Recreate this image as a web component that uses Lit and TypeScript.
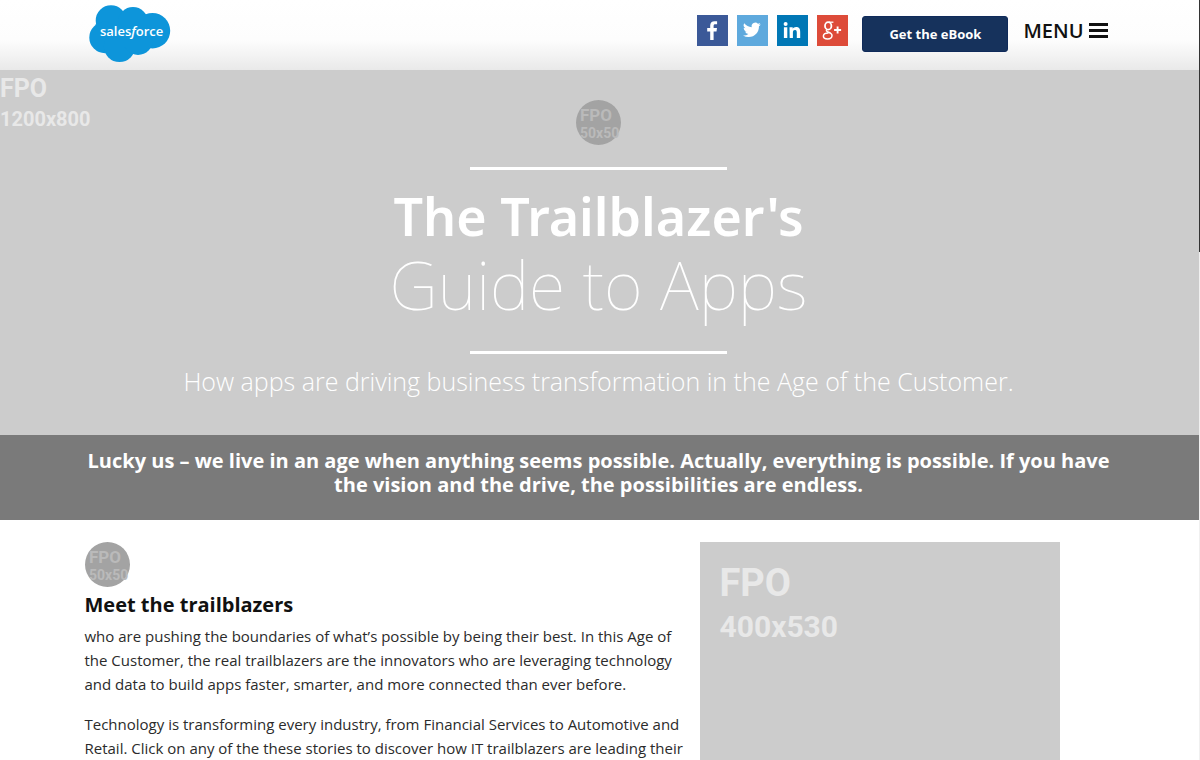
import { LitElement, html, css, svg } from "lit";
import { customElement, property } from "lit/decorators.js";

const cloud = svg`
  <g fill="#0d95da">
    <circle cx="22" cy="15.500" r="15.300"></circle>
    <circle cx="44" cy="17" r="15"></circle>
    <circle cx="63.500" cy="25.700" r="17.700"></circle>
    <circle cx="16" cy="32.500" r="15.700"></circle>
    <circle cx="30.500" cy="41.300" r="15.700"></circle>
    <circle cx="49" cy="35" r="15"></circle>
    <rect x="20" y="14" width="40" height="28"></rect>
  </g>`;

const socials = [
  {
    name: "Facebook",
    tone: "facebook",
    art: svg`<path fill="#fff" d="M17.1 25v-8.600h2.900l.5-3.400h-3.400v-2.100c0-1 .4-1.600 1.700-1.600h1.800V6.300c-.4 0-1.400-.1-2.500-.1-2.700 0-4.400 1.500-4.400 4.300V13h-3v3.400h3V25z" transform="translate(-.5 0)"></path>`,
  },
  {
    name: "Twitter",
    tone: "twitter",
    art: svg`<path transform="translate(6 6) scale(.74)" fill="#fff" d="M23.95 4.57a10 10 0 0 1-2.82.77 4.96 4.96 0 0 0 2.16-2.72c-.95.55-2 .95-3.13 1.18a4.92 4.92 0 0 0-8.38 4.48C7.69 8.09 4.07 6.13 1.64 3.16a4.92 4.92 0 0 0 1.52 6.57 4.9 4.9 0 0 1-2.23-.61v.06a4.92 4.92 0 0 0 3.95 4.83 5 5 0 0 1-2.21.08 4.94 4.94 0 0 0 4.6 3.42A9.87 9.87 0 0 1 0 19.54a14 14 0 0 0 7.55 2.21c9.05 0 14-7.5 14-13.98 0-.21 0-.42-.02-.63a9.9 9.9 0 0 0 2.46-2.55z"></path>`,
  },
  {
    name: "LinkedIn",
    tone: "linkedin",
    art: svg`<g fill="#fff"><circle cx="8.6" cy="9.1" r="2"></circle><path d="M6.9 12.3h3.400V23H6.900zM12.500 12.300h3.200v1.500c.6-1 1.800-1.800 3.400-1.800 3.400 0 4.100 2.200 4.100 5.100V23h-3.400v-5.200c0-1.300 0-2.900-1.800-2.900s-2.100 1.400-2.100 2.800V23h-3.200z"></path></g>`,
  },
  {
    name: "Google Plus",
    tone: "google",
    art: svg`<g fill="none" stroke="#fff"><ellipse cx="11.2" cy="10.900" rx="3.200" ry="3.700" stroke-width="1.800"></ellipse><path stroke-width="1.300" d="M12 7.200h4.400"></path><path stroke-width="1.500" d="M10.200 14.300c-1.400 1.200-.9 2 .6 2.600 2 .7 4.200 1.400 4.200 3.700 0 2.100-2 3.400-4.400 3.400-2.500 0-4.200-1.200-4.200-3 0-2 2-3.100 5-3.100"></path><path stroke-width="1.900" d="M20.600 11.500v7M17.100 15h7"></path></g>`,
  },
];

@customElement("fpo-badge")
export class FpoBadge extends LitElement {
  static styles = css`
    :host {
      display: block;
      width: 45px;
    }
    .disc {
      display: block;
      width: 45px;
      height: 45px;
    }
    .disc text {
      font-family: Roboto, sans-serif;
      font-weight: 700;
      fill: #bababa;
    }
  `;
  render() {
    return html`<svg class="disc" viewBox="0 0 45 45" role="img" aria-label="FPO 50x50">
      <circle cx="22.5" cy="22.5" r="22.5" fill="#a3a3a3"></circle>
      <text x="4" y="21" font-size="17">FPO</text>
      <text x="4" y="38" font-size="14">50x50</text>
    </svg>`;
  }
}

@customElement("fpo-label")
export class FpoLabel extends LitElement {
  @property() size = "";
  static styles = css`
    :host {
      display: block;
      font-family: Roboto, sans-serif;
      font-weight: 700;
      color: #e8e8e8;
    }
    .word,
    .size {
      display: block;
    }
    .word {
      font-size: var(--word-size, 25px);
      line-height: var(--word-line, 30px);
    }
    .size {
      font-size: var(--size-size, 20px);
      line-height: var(--size-line, 30px);
    }
  `;
  render() {
    return html`<span class="word">FPO</span><span class="size">${this.size}</span>`;
  }
}

@customElement("app-root")
export class AppRoot extends LitElement {
  static styles = css`
    :host {
      display: block;
      position: relative;
      height: 100vh;
      overflow: hidden;
      background: #fff;
      color: #2b2b2b;
      font: 15px/24px "Open Sans", "Noto Sans", sans-serif;
    }
    * {
      box-sizing: border-box;
    }
    h1, h2, p {
      margin: 0;
    }
    .header,
    .hero,
    .band,
    .body {
      padding-right: 3px;
    }
    .container {
      max-width: 1030px;
      margin: 0 auto;
    }
    .header {
      background: linear-gradient(#fff 0, #fdfdfd 40px, #e9e9e9 70px);
    }
    .bar {
      display: flex;
      align-items: flex-start;
      justify-content: space-between;
      height: 70px;
      padding: 5px 6px 0 5px;
    }
    .logo svg {
      display: block;
      width: 82px;
      height: 60px;
    }
    .logo text {
      font: 600 13px "Open Sans", sans-serif;
      fill: #fff;
    }
    .actions {
      display: flex;
      align-items: center;
      padding-top: 9px;
    }
    .socials {
      display: flex;
      gap: 9px;
      margin-right: 14px;
      padding-bottom: 6px;
    }
    .social {
      display: block;
      width: 31px;
      height: 31px;
    }
    .social svg {
      display: block;
    }
    .facebook { background: #3b5998; }
    .twitter { background: #5ea9dd; }
    .linkedin { background: #0077b5; }
    .google { background: #dd4b39; }
    .cta {
      width: 146px;
      height: 36px;
      margin: 2px 15px 0 0;
      padding: 0;
      border: 1px solid #0f2a5a;
      border-radius: 3px;
      background: #16325c;
      color: #fff;
      font: 700 13px "Open Sans", sans-serif;
    }
    .menu {
      display: flex;
      align-items: center;
      gap: 5px;
      padding: 0 0 4px;
      border: 0;
      background: none;
      color: #111;
      font: 600 20px/30px "Open Sans", sans-serif;
    }
    .hero {
      position: relative;
      padding-top: 30px;
      padding-bottom: 37px;
      background: #ccc;
      color: #fff;
      text-align: center;
    }
    .hero-label {
      position: absolute;
      left: 0;
      top: 4px;
      text-align: left;
    }
    .hero fpo-badge {
      margin: 0 auto 22px;
    }
    .rule {
      width: 257px;
      height: 3px;
      margin: 0 auto;
      background: #fff;
    }
    .title {
      padding: 12px 0 33px;
      font-family: "Noto Sans", sans-serif;
      line-height: 68px;
    }
    .title span {
      display: block;
    }
    .strong {
      font-size: 52px;
      font-weight: 650;
    }
    .thin {
      font-size: 67px;
      font-weight: 100;
    }
    .tagline {
      padding-top: 10px;
      font-size: 25px;
      line-height: 34px;
      font-weight: 300;
    }
    .band {
      padding-top: 14px;
      padding-bottom: 23px;
      background: #7a7a7a;
      color: #fff;
      text-align: center;
      font: 700 20px/24px "Open Sans", sans-serif;
    }
    .story {
      display: grid;
      grid-template-columns: minmax(0, 1fr) 360px;
      gap: 10px;
      padding: 22px 54px 0 1px;
    }
    .copy h2 {
      margin: 4px 0 5px;
      color: #111;
      font-size: 20px;
      line-height: 28px;
      font-weight: 700;
    }
    .copy p + p {
      margin-top: 16px;
    }
    .picture {
      aspect-ratio: 400 / 530;
      padding: 18px 20px;
      background: #ccc;
      --word-size: 38px;
      --word-line: 46px;
      --size-size: 30px;
      --size-line: 42px;
    }
    .edge {
      position: absolute;
      top: 0;
      right: 0;
      width: 1px;
      height: 100%;
      background: linear-gradient(#333 252px, #f0f0f0 252px);
    }
  `;

  render() {
    return html`
      <header class="header">
        <div class="container bar">
          <a class="logo" href="#" aria-label="salesforce">
            <svg viewBox="0 0 82 60">
              ${cloud}
              <text x="11" y="31">sales<tspan font-style="italic">f</tspan>orce</text>
            </svg>
          </a>
          <div class="actions">
            <nav class="socials" aria-label="Share">
              ${socials.map(
                (s) => html`<a class="social ${s.tone}" href="#" aria-label=${s.name}>
                  <svg width="31" height="31" viewBox="0 0 31 31">${s.art}</svg>
                </a>`
              )}
            </nav>
            <button class="cta" type="button">Get the eBook</button>
            <button class="menu" type="button">
              MENU
              <svg width="19" height="16" viewBox="0 0 19 16" aria-hidden="true">
                <path fill="#111" d="M0 0h19v3H0zM0 6h19v3H0zM0 12h19v3H0z"></path>
              </svg>
            </button>
          </div>
        </div>
      </header>
      <main>
        <section class="hero">
          <fpo-label class="hero-label" size="1200x800"></fpo-label>
          <fpo-badge></fpo-badge>
          <div class="rule"></div>
          <h1 class="title">
            <span class="strong">The Trailblazer's</span>
            <span class="thin">Guide to Apps</span>
          </h1>
          <div class="rule"></div>
          <p class="tagline">How apps are driving business transformation in the Age of the Customer.</p>
        </section>
        <section class="band">
          <p class="container">
            Lucky us – we live in an age when anything seems possible. Actually, everything is
            possible. If you have the vision and the drive, the possibilities are endless.
          </p>
        </section>
        <section class="body">
          <div class="container story">
            <div class="copy">
              <fpo-badge></fpo-badge>
              <h2>Meet the trailblazers</h2>
              <p>
                who are pushing the boundaries of what’s possible by being their best. In this Age
                of the Customer, the real trailblazers are the innovators who are leveraging
                technology and data to build apps faster, smarter, and more connected than ever
                before.
              </p>
              <p>
                Technology is transforming every industry, from Financial Services to Automotive and
                Retail. Click on any of the these stories to discover how IT trailblazers are
                leading their
              </p>
            </div>
            <div class="picture"><fpo-label size="400x530"></fpo-label></div>
          </div>
        </section>
      </main>
      <div class="edge"></div>
    `;
  }
}
